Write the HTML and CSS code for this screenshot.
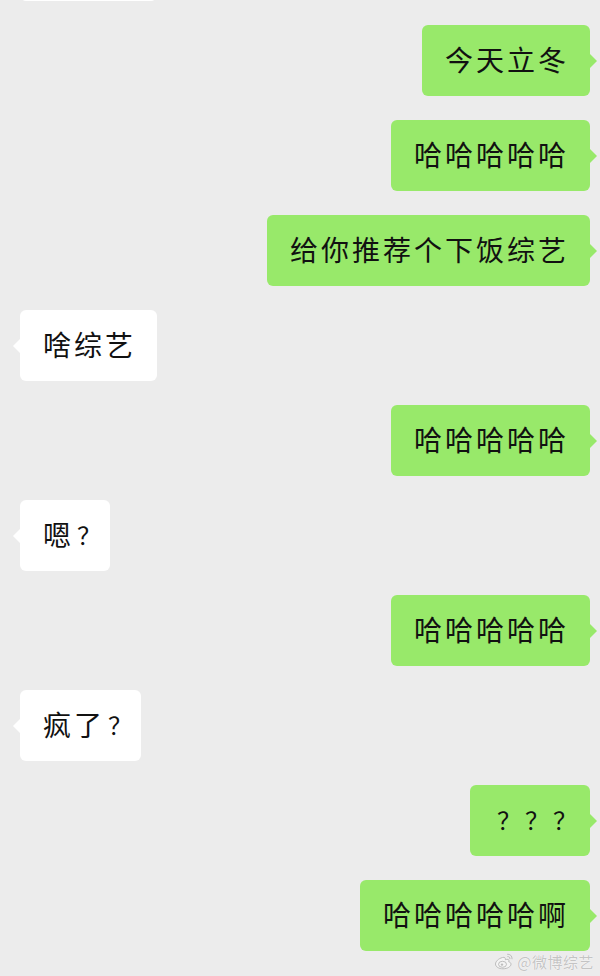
FILE: index.html
```html
<!DOCTYPE html>
<html lang="zh">
<head>
<meta charset="utf-8">
<title>聊天</title>
<link rel="stylesheet" href="styles.css">
</head>
<body>
<div class="chat">
  <div class="row left first"><div class="bubble white">哈哈哈</div></div>
  <div class="row right"><div class="bubble green">今天立冬</div></div>
  <div class="row right"><div class="bubble green">哈哈哈哈哈</div></div>
  <div class="row right"><div class="bubble green">给你推荐个下饭综艺</div></div>
  <div class="row left"><div class="bubble white">啥综艺</div></div>
  <div class="row right"><div class="bubble green">哈哈哈哈哈</div></div>
  <div class="row left"><div class="bubble white">嗯<span class="q">？</span></div></div>
  <div class="row right"><div class="bubble green">哈哈哈哈哈</div></div>
  <div class="row left"><div class="bubble white">疯了<span class="q">？</span></div></div>
  <div class="row right"><div class="bubble green qs"><span class="q">？</span><span class="q">？</span><span class="q">？</span></div></div>
  <div class="row right"><div class="bubble green">哈哈哈哈哈啊</div></div>
</div>
<div class="watermark">
  <svg class="wb" width="20" height="17" viewBox="0 0 20 17">
    <path d="M8.5 4.5c-4 1-7 4-7 6.5 0 3 3.5 4.8 7.5 4.8 4.5 0 8-2.3 8-4.6 0-1.6-1.4-2.2-2.3-2.4 .6-1.6 .2-2.8-2-2.4l-1.3.4c.3-1.6-.6-3-2.9-2.3z" fill="#f4f4f4" stroke="#bdbdbd" stroke-width="1"/>
    <ellipse cx="8.5" cy="11.3" rx="4" ry="3" fill="none" stroke="#bdbdbd" stroke-width="1"/>
    <circle cx="8" cy="11.6" r="1.2" fill="#bdbdbd"/>
    <path d="M13.5 1.2c2.5-.3 4.8 1.7 4.6 4.6M13.8 3.5c1.2-.1 2.3.9 2.2 2.2" fill="none" stroke="#bdbdbd" stroke-width="1" stroke-linecap="round"/>
  </svg>
  <span class="wm-text">@微博综艺</span>
</div>
</body>
</html>
```

FILE: styles.css
```css
html, body {
  margin: 0;
  padding: 0;
}
body {
  background: #ececec;
  width: 600px;
  height: 976px;
  overflow: hidden;
  position: relative;
  font-family: "Noto Sans CJK SC", "Noto Sans", sans-serif;
}
.chat {
  display: flex;
  flex-direction: column;
  gap: 24px;
  padding: 0 10px 0 20px;
}
.row {
  display: flex;
}
.row.left { justify-content: flex-start; }
.row.right { justify-content: flex-end; }
.row.first { margin-top: -70px; }
.bubble {
  position: relative;
  box-sizing: border-box;
  height: 71px;
  padding: 17px 21px 19px 23px;
  font-size: 28px;
  line-height: 35px;
  letter-spacing: 3px;
  color: #111;
  border-radius: 6px;
  white-space: nowrap;
}
.bubble.green {
  background: #98e96a;
}
.bubble.white {
  background: #ffffff;
}
.bubble::after {
  content: "";
  position: absolute;
  top: 50%;
  margin-top: -7px;
  width: 0;
  height: 0;
  border-top: 7px solid transparent;
  border-bottom: 7px solid transparent;
}
.bubble.green::after {
  right: -7px;
  border-left: 7px solid #98e96a;
}
.bubble.white::after {
  left: -7px;
  border-right: 7px solid #ffffff;
}
.q {
  font-size: 24px;
  letter-spacing: 0;
  font-feature-settings: "palt" 1;
  margin-left: 3px;
  vertical-align: 1px;
}
.bubble.qs {
  padding-left: 19px;
  padding-right: 17px;
}
.bubble.qs .q {
  margin: 0 8px;
}
.watermark {
  position: absolute;
  right: 6px;
  bottom: 4px;
  display: flex;
  align-items: center;
  gap: 3px;
}
.wm-text {
  font-size: 15px;
  color: #c4c4c4;
  text-shadow: 0 0 1px #fff, 0 0 1px #fff;
  letter-spacing: 0.5px;
}
```
